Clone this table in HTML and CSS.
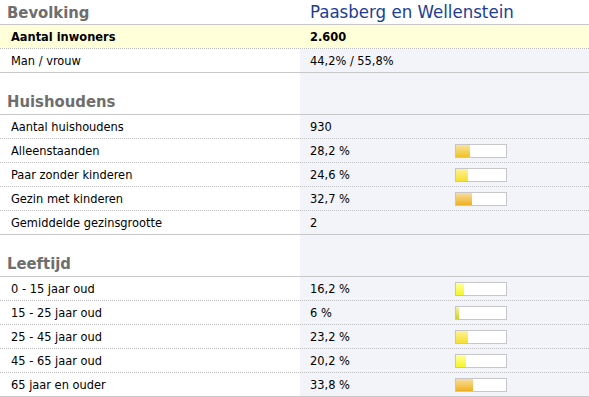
FILE: index.html
```html
<!DOCTYPE html>
<html lang="nl">
<head>
<meta charset="utf-8">
<title>Paasberg en Wellenstein</title>
<link rel="stylesheet" href="styles.css">
</head>
<body>
<div class="page">
  <section class="section first">
    <div class="head">
      <h2 class="heading">Bevolking</h2>
      <div class="title">Paasberg en Wellenstein</div>
    </div>
    <div class="row hl dotted"><div class="label">Aantal inwoners</div><div class="value">2.600</div></div>
    <div class="row"><div class="label">Man / vrouw</div><div class="value">44,2% / 55,8%</div></div>
  </section>

  <section class="section">
    <div class="head"><h2 class="heading">Huishoudens</h2></div>
    <div class="row dotted"><div class="label">Aantal huishoudens</div><div class="value">930</div></div>
    <div class="row dotted"><div class="label">Alleenstaanden</div><div class="value">28,2 %</div><div class="bar"><span class="fill gold" style="width:28.2%"></span></div></div>
    <div class="row dotted"><div class="label">Paar zonder kinderen</div><div class="value">24,6 %</div><div class="bar"><span class="fill yellow" style="width:24.6%"></span></div></div>
    <div class="row dotted"><div class="label">Gezin met kinderen</div><div class="value">32,7 %</div><div class="bar"><span class="fill orange" style="width:32.7%"></span></div></div>
    <div class="row"><div class="label">Gemiddelde gezinsgrootte</div><div class="value">2</div></div>
  </section>

  <section class="section">
    <div class="head"><h2 class="heading">Leeftijd</h2></div>
    <div class="row dotted"><div class="label">0 - 15 jaar oud</div><div class="value">16,2 %</div><div class="bar"><span class="fill bright" style="width:16.2%"></span></div></div>
    <div class="row dotted"><div class="label">15 - 25 jaar oud</div><div class="value">6 %</div><div class="bar"><span class="fill lime" style="width:6%"></span></div></div>
    <div class="row dotted"><div class="label">25 - 45 jaar oud</div><div class="value">23,2 %</div><div class="bar"><span class="fill yellow" style="width:23.2%"></span></div></div>
    <div class="row dotted"><div class="label">45 - 65 jaar oud</div><div class="value">20,2 %</div><div class="bar"><span class="fill bright" style="width:20.2%"></span></div></div>
    <div class="row"><div class="label">65 jaar en ouder</div><div class="value">33,8 %</div><div class="bar"><span class="fill orange" style="width:33.8%"></span></div></div>
  </section>
</div>
</body>
</html>
```
FILE: styles.css
```css
html, body {
  margin: 0;
  padding: 0;
  background: #ffffff;
}
body {
  font-family: "DejaVu Sans Condensed", "DejaVu Sans", sans-serif;
  font-size: 12.7px;
  color: #000;
}
.page {
  width: 589px;
  height: 397px;
  background: linear-gradient(to right, #ffffff 300px, #f3f4f9 300px);
  overflow: hidden;
}
.section {
  margin-top: 17px;
}
.section.first {
  margin-top: 0;
}
.head {
  display: grid;
  grid-template-columns: 300px 1fr;
  height: 24px;
  border-bottom: 1px solid #c8c8c8;
  align-items: end;
}
.first .head {
  background: #ffffff;
}
.heading {
  margin: 0;
  padding-left: 7px;
  font-family: "DejaVu Sans Condensed", "DejaVu Sans", sans-serif;
  font-size: 16.5px;
  font-weight: bold;
  color: #6e6e6e;
  line-height: 22px;
  padding-bottom: 1px;
}
.title {
  padding-left: 10px;
  font-family: "DejaVu Sans Condensed", "DejaVu Sans", sans-serif;
  font-size: 18.5px;
  color: #1b3e94;
  line-height: 24px;
  padding-bottom: 1px;
}
.row {
  display: grid;
  grid-template-columns: 300px 155px 52px 1fr;
  height: 23px;
  align-items: center;
  border-bottom: 1px solid #c8c8c8;
}
.row.dotted {
  border-bottom: 1px dotted #bdbdbd;
}
.row.hl {
  background: #ffffd9;
  font-weight: bold;
}
.label {
  padding-left: 11px;
}
.value {
  padding-left: 10px;
}
.bar {
  box-sizing: border-box;
  width: 52px;
  height: 14px;
  border: 1px solid #c6c6c6;
  background: #ffffff;
  display: flex;
}
.fill {
  display: block;
  height: 100%;
}
.fill.gold { background: linear-gradient(#f9e39a, #f1c225); }
.fill.yellow { background: linear-gradient(#fdf29a, #f6e02c); }
.fill.orange { background: linear-gradient(#f8dca0, #efb120); }
.fill.bright { background: linear-gradient(#ffff9e, #f7f526); }
.fill.lime { background: linear-gradient(#f4f2a8, #d4cf22); }
```
